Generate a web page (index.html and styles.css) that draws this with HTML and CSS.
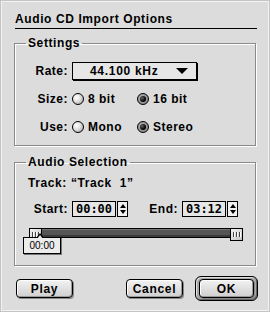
FILE: index.html
```html
<!DOCTYPE html>
<html lang="en">
<head>
  <meta charset="UTF-8" />
  <title>Audio CD Import Options</title>
  <link rel="stylesheet" href="styles.css">
</head>
<body>
  <div class="dialog">
    <div class="title">Audio CD Import Options</div>

    <!-- Settings -->
    <fieldset class="group settings">
      <legend>Settings</legend>
      <div class="row">
        <span class="label">Rate:</span>
        <div class="popup">
          <span>44.100 kHz</span>
          <span class="arrow"></span>
        </div>
      </div>
      <div class="row">
        <span class="label">Size:</span>
        <label class="option"><span class="radio"></span>8 bit</label>
        <label class="option"><span class="radio on"></span>16 bit</label>
      </div>
      <div class="row">
        <span class="label">Use:</span>
        <label class="option"><span class="radio"></span>Mono</label>
        <label class="option"><span class="radio on"></span>Stereo</label>
      </div>
    </fieldset>

    <!-- Audio Selection -->
    <fieldset class="group selection">
      <legend>Audio Selection</legend>
      <div class="track-name">Track: &ldquo;Track&nbsp; 1&rdquo;</div>
      <div class="row times">
        <span class="label">Start:</span>
        <div class="field">00:00</div>
        <div class="stepper"><span class="up"></span><span class="down"></span></div>
        <span class="label end">End:</span>
        <div class="field">03:12</div>
        <div class="stepper"><span class="up"></span><span class="down"></span></div>
      </div>
      <div class="slider">
        <div class="slider-track"></div>
        <div class="thumb left"><i></i><i></i><i></i></div>
        <div class="thumb right"><i></i><i></i><i></i></div>
        <div class="tip">00:00</div>
      </div>
    </fieldset>

    <div class="buttons">
      <button class="btn">Play</button>
      <button class="btn cancel">Cancel</button>
      <div class="default-ring"><button class="btn">OK</button></div>
    </div>
  </div>
</body>
</html>
```

FILE: styles.css
```css
/* Mac OS 8 style dialog */
* {
  box-sizing: border-box;
  margin: 0;
  padding: 0;
}
body {
  background: #dcdcdc;
  font-family: "Liberation Sans", Arial, sans-serif;
  font-weight: bold;
  font-size: 12px;
  line-height: 14px;
  color: #000;
}
.dialog {
  width: 270px;
  height: 312px;
  padding-top: 11px;
  background: #dcdcdc;
  border: 1px solid #c4c4c4;
  box-shadow: inset 1px 1px 0 #f2f2f2, inset -1px -1px 0 #f2f2f2;
}
.title {
  margin: 0 12px 0 14px;
  padding-bottom: 2px;
  border-bottom: 1px solid #000;
  letter-spacing: 0.6px;
}

/* Group boxes */
.group {
  margin: 7px 13px 0 13px;
  border: 1px solid #8a8a8a;
  box-shadow: inset 1px 1px 0 #fff, 1px 1px 0 #fff;
}
.group legend {
  margin-left: 11px;
  padding: 0 2px;
  letter-spacing: 0.6px;
}
.settings {
  height: 110px;
  display: flex;
  flex-direction: column;
  gap: 10px;
  padding-top: 12px;
}
.selection {
  margin-top: 9px;
  height: 111px;
}
.row {
  display: flex;
  align-items: center;
  height: 18px;
}
.label {
  width: 53px;
  text-align: right;
  margin-right: 4px;
  letter-spacing: 0.5px;
}

/* Popup menu */
.popup {
  width: 125px;
  height: 18px;
  display: flex;
  align-items: center;
  justify-content: space-between;
  padding: 0 8px 0 17px;
  border: 1px solid #000;
  background: #e6e6e6;
  box-shadow: 1px 1px 0 #000;
  letter-spacing: 0.7px;
}
.arrow {
  width: 0;
  height: 0;
  border-left: 6px solid transparent;
  border-right: 6px solid transparent;
  border-top: 6px solid #000;
}

/* Radio buttons */
.option {
  width: 65px;
  display: flex;
  align-items: center;
  gap: 4px;
  letter-spacing: 0.5px;
}
.radio {
  width: 12px;
  height: 12px;
  border-radius: 50%;
  border: 1px solid #000;
  background: radial-gradient(circle at 35% 35%, #fff 0, #e8e8e8 35%, #9a9a9a 100%);
  display: flex;
  align-items: center;
  justify-content: center;
}
.radio.on {
  background: radial-gradient(circle at 40% 40%, #bbb 0, #777 100%);
}
.radio.on::after {
  content: "";
  width: 6px;
  height: 6px;
  border-radius: 50%;
  background: radial-gradient(circle at 35% 35%, #666 0, #000 60%);
}

/* Audio selection */
.track-name {
  margin: 7px 0 0 13px;
  letter-spacing: 0.6px;
}
.times {
  margin-top: 11px;
  height: 16px;
}
.field {
  width: 44px;
  height: 16px;
  border: 1px solid #000;
  background: #e6e6e6;
  font-family: "DejaVu Sans Mono", monospace;
  font-weight: bold;
  font-size: 12px;
  line-height: 14px;
  text-align: center;
}
.stepper {
  width: 11px;
  height: 16px;
  margin-left: 1px;
  border: 1px solid #000;
  background: #f0f0f0;
  display: flex;
  flex-direction: column;
  align-items: center;
  justify-content: center;
  gap: 2px;
}
.stepper .up,
.stepper .down {
  width: 0;
  height: 0;
  border-left: 3px solid transparent;
  border-right: 3px solid transparent;
}
.stepper .up {
  border-bottom: 4px solid #000;
}
.stepper .down {
  border-top: 4px solid #000;
}
.label.end {
  width: 50px;
  margin-right: 4px;
}

/* Slider */
.slider {
  position: relative;
  margin: 11px 0 0 14px;
  width: 214px;
  height: 13px;
}
.slider-track {
  margin-top: 1px;
  height: 10px;
  border: 1px solid #000;
  background: #555;
  box-shadow: inset 0 -2px 0 #3a3a3a, inset 0 1px 0 #777;
}
.thumb {
  position: absolute;
  top: 0;
  width: 13px;
  height: 13px;
  border: 1px solid #000;
  background: linear-gradient(135deg, #f4f4f4, #c4c4c4);
  display: flex;
  align-items: center;
  justify-content: center;
  gap: 1px;
}
.thumb i {
  width: 1px;
  height: 5px;
  background: #444;
  box-shadow: 1px 0 0 #fff;
  margin-right: 1px;
}
.thumb.left {
  left: 0;
}
.thumb.right {
  right: 0;
}
.tip {
  position: absolute;
  top: 9px;
  left: -6px;
  width: 38px;
  height: 17px;
  border: 1px solid #000;
  background: #ececec;
  box-shadow: 1px 1px 0 #777;
  font-weight: normal;
  font-size: 10px;
  line-height: 15px;
  text-align: center;
}
.tip::before {
  content: "";
  position: absolute;
  top: -5px;
  left: 12px;
  width: 0;
  height: 0;
  border-left: 4px solid transparent;
  border-right: 4px solid transparent;
  border-bottom: 5px solid #000;
}
.tip::after {
  content: "";
  position: absolute;
  top: -3px;
  left: 13px;
  width: 0;
  height: 0;
  border-left: 3px solid transparent;
  border-right: 3px solid transparent;
  border-bottom: 4px solid #ececec;
}

/* Buttons */
.buttons {
  display: flex;
  align-items: center;
  height: 25px;
  margin-top: 10px;
  padding: 0 11px 0 15px;
}
.btn {
  width: 57px;
  height: 19px;
  border: 1px solid #000;
  border-radius: 4px;
  background: linear-gradient(#f2f2f2, #cfcfcf);
  box-shadow: inset 1px 1px 0 #fff, inset -1px -1px 0 #9a9a9a, 1px 1px 0 #888;
  font-family: inherit;
  font-weight: bold;
  font-size: 12px;
  letter-spacing: 0.7px;
  color: #000;
}
.cancel {
  margin-left: auto;
}
.default-ring {
  margin-left: 12px;
  width: 63px;
  height: 25px;
  padding: 2px 3px;
  border: 1px solid #000;
  border-radius: 6px;
  background: #a8a8a8;
  box-shadow: inset 1px 1px 0 #e0e0e0, inset -1px -1px 0 #666;
}
.default-ring .btn {
  width: 55px;
}
```
